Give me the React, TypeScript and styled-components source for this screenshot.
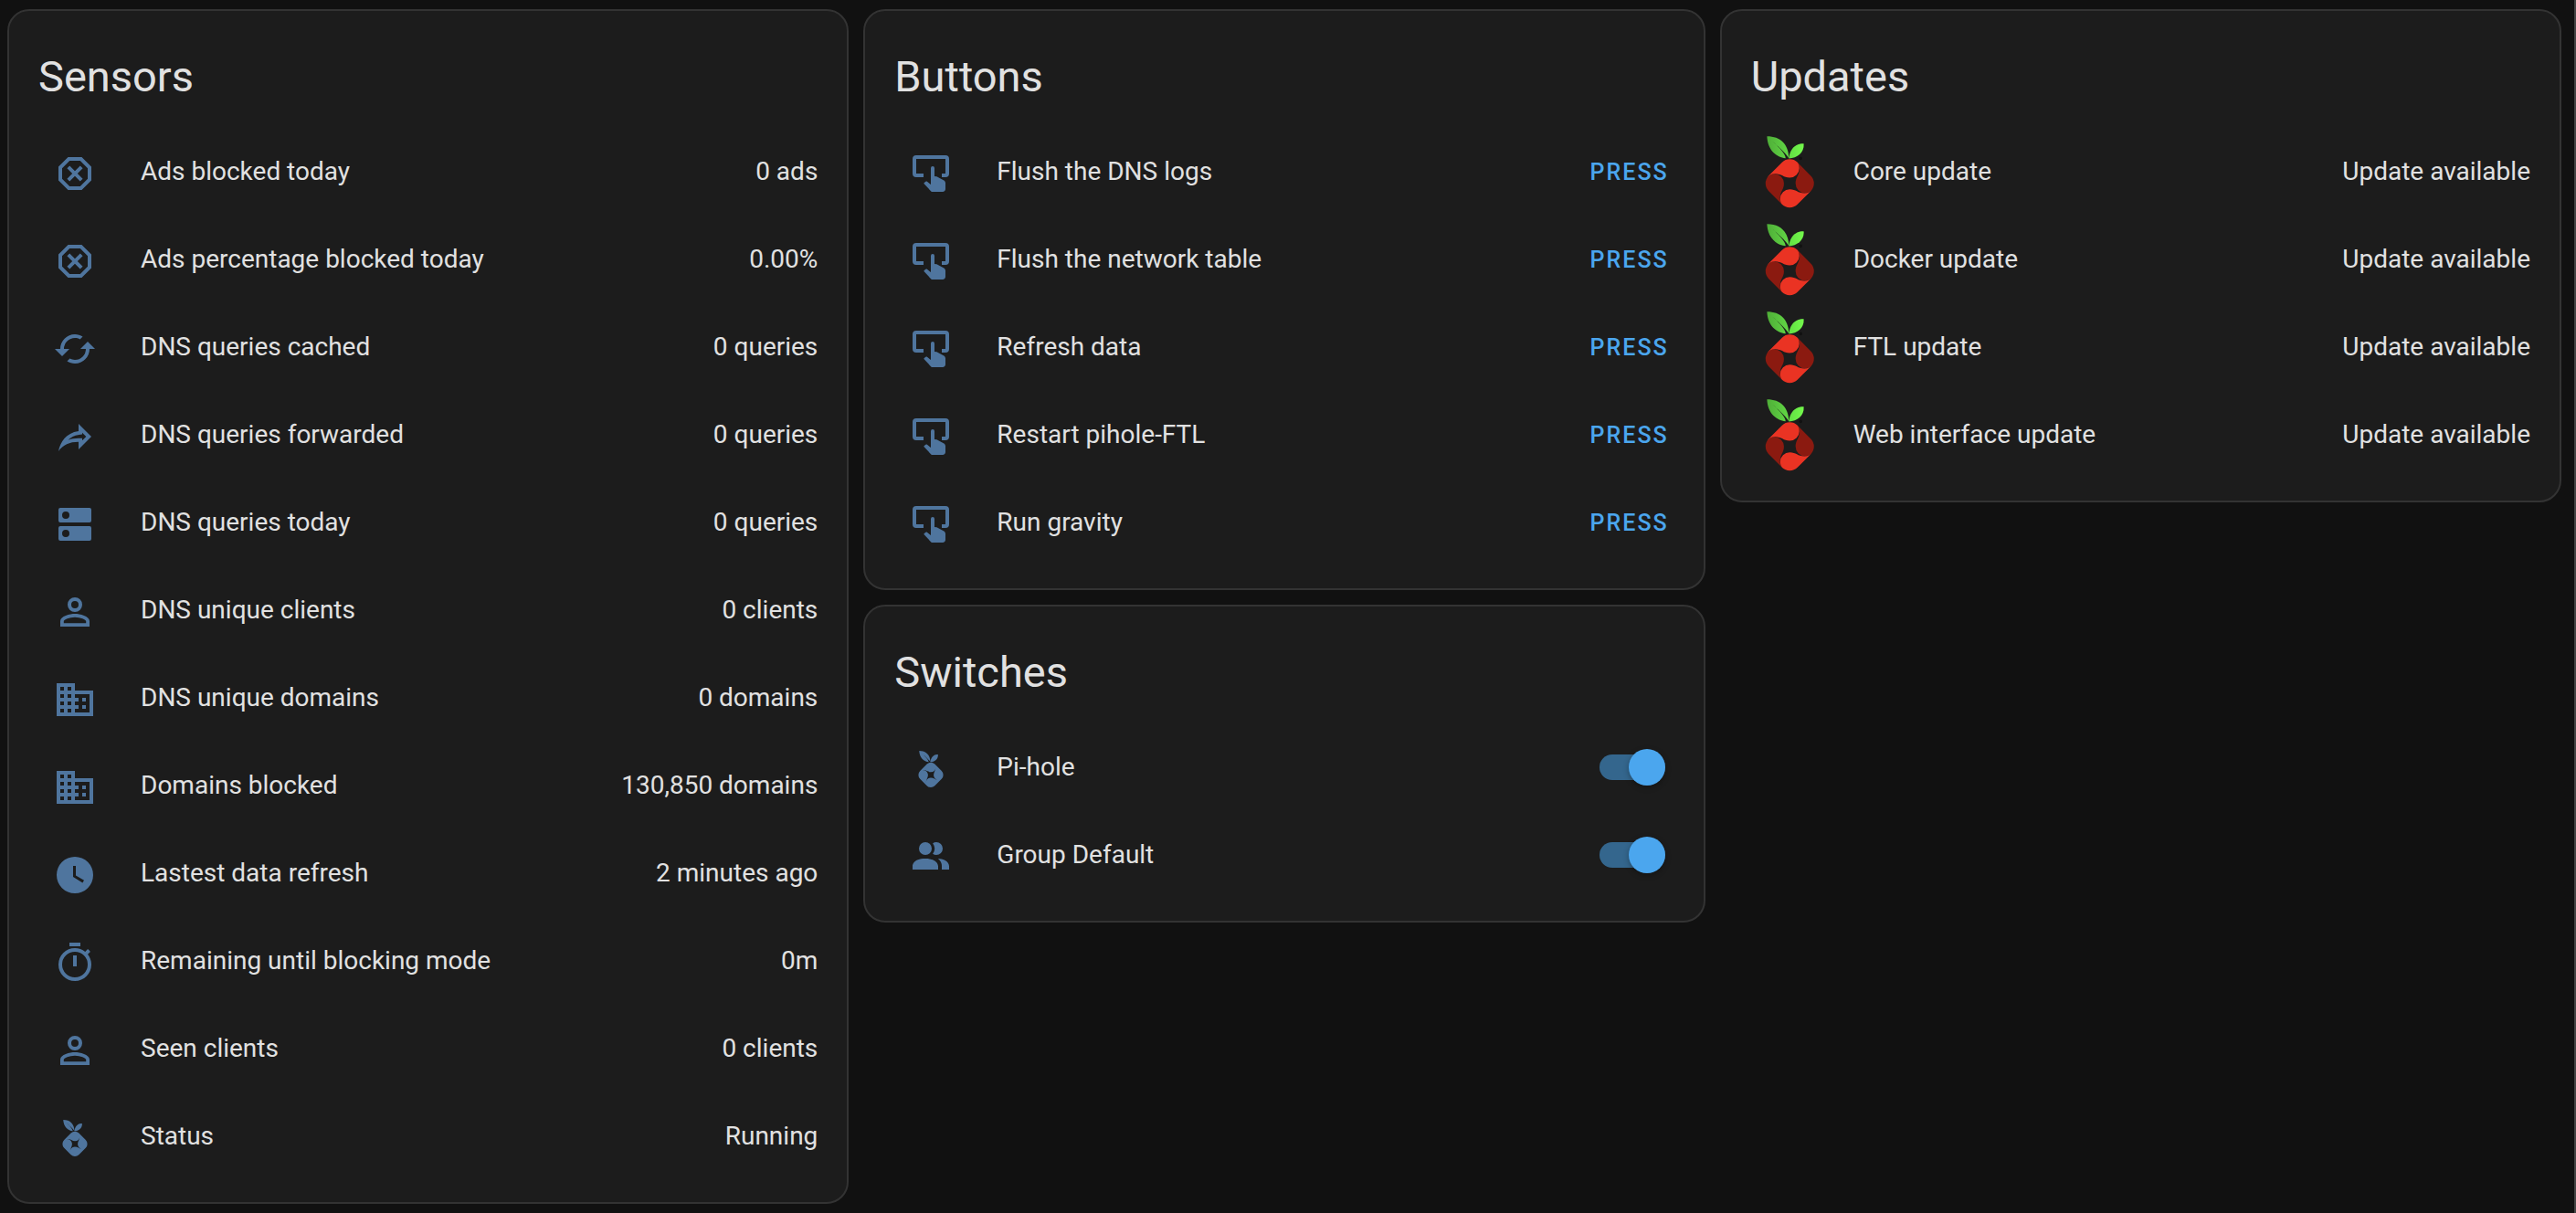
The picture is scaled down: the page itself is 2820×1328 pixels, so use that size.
import React, { useId, useState } from 'react';
import styled, { createGlobalStyle } from 'styled-components';

const GlobalStyle = createGlobalStyle`
  *, *::before, *::after { box-sizing: border-box; }
  body {
    margin: 0;
    background: #111111;
    color: #e1e1e1;
    font-family: Roboto, "Noto Sans", sans-serif;
    font-size: 28px;
    line-height: 40px;
    -webkit-font-smoothing: antialiased;
  }
`;

const Dashboard = styled.main`
  display: grid;
  grid-template-columns: repeat(3, minmax(0, 1fr));
  align-items: start;
  gap: 16px;
  min-height: 100vh;
  padding: 10px 14px 10px 8px;
  border-right: 2px solid #444444;
`;

const Column = styled.div`
  display: flex;
  flex-direction: column;
  gap: 16px;
`;

const CardBox = styled.section`
  padding: 24px 32px 32px;
  border: 2px solid #333333;
  border-radius: 24px;
  background: #1c1c1c;
`;

const CardTitle = styled.h2`
  margin: 0 0 16px;
  font-size: 47px;
  font-weight: 400;
  line-height: 96px;
`;

const Rows = styled.ul`
  display: flex;
  flex-direction: column;
  gap: 16px;
  margin: 0;
  padding: 0;
  list-style: none;
`;

const Row = styled.li`
  display: flex;
  align-items: center;
  height: 80px;
`;

const Badge = styled.span`
  display: flex;
  flex: none;
  align-items: center;
  justify-content: center;
  width: 80px;
  height: 80px;
  margin-right: 32px;
  color: #4f759e;
`;

const Glyph = styled.svg`
  width: 48px;
  height: 48px;
  margin-top: 4px;
  fill: currentColor;
`;

const Logo = styled.svg`
  width: 80px;
  height: 80px;
`;

const Name = styled.span`
  flex: 1;
  min-width: 0;
  overflow: hidden;
  text-overflow: ellipsis;
  white-space: nowrap;
`;

const NameLabel = styled(Name).attrs({ as: 'label' })<{ htmlFor?: string }>``;

const Value = styled.span`
  flex: none;
  white-space: nowrap;
`;

const PressButton = styled.button`
  flex: none;
  height: 72px;
  margin-right: -10px;
  padding: 0 16px;
  border: 0;
  border-radius: 8px;
  background: transparent;
  color: #4ba6ee;
  font-family: inherit;
  font-size: 25px;
  font-weight: 500;
  letter-spacing: 2px;
  text-transform: uppercase;
  cursor: pointer;
`;

const Toggle = styled.input`
  appearance: none;
  display: flex;
  flex: none;
  align-items: center;
  width: 72px;
  height: 28px;
  margin: 0 10px 0 0;
  border-radius: 14px;
  background: #666666;
  cursor: pointer;

  &::before {
    content: "";
    width: 40px;
    height: 40px;
    border-radius: 50%;
    background: #bdbdbd;
    box-shadow: 0 2px 6px rgba(0, 0, 0, 0.3);
  }

  &:checked {
    justify-content: flex-end;
    background: #34668d;
  }

  &:checked::before {
    background: #4ba6ee;
  }
`;

const paths = {
  closeOctagon:
    'M8.27,3L3,8.27V15.73L8.27,21H15.73L21,15.73V8.27L15.73,3M9.1,5H14.9L19,9.1V14.9L14.9,19H9.1L5,14.9V9.1M9.12,7.71L7.71,9.12L10.59,12L7.71,14.88L9.12,16.29L12,13.41L14.88,16.29L16.29,14.88L13.41,12L16.29,9.12L14.88,7.71L12,10.59',
  cached:
    'M19,8L15,12H18A6,6 0 0,1 12,18C11,18 10.03,17.75 9.2,17.3L7.74,18.76C8.97,19.54 10.43,20 12,20A8,8 0 0,0 20,12H23M6,12A6,6 0 0,1 12,6C13,6 13.97,6.25 14.8,6.7L16.26,5.24C15.03,4.46 13.57,4 12,4A8,8 0 0,0 4,12H1L5,16L9,12',
  share:
    'M14,5V9C7,10 4,15 3,20C5.5,16.5 9,14.9 14,14.9V19L21,12L14,5M16,9.83L18.17,12L16,14.17V12.9H14C11.93,12.9 10.07,13.28 8.34,13.85C9.74,12.46 11.54,11.37 14.28,11L16,10.73V9.83Z',
  dns: 'M7,9A2,2 0 0,1 5,7A2,2 0 0,1 7,5A2,2 0 0,1 9,7A2,2 0 0,1 7,9M20,3H4A1,1 0 0,0 3,4V10A1,1 0 0,0 4,11H20A1,1 0 0,0 21,10V4A1,1 0 0,0 20,3M7,19A2,2 0 0,1 5,17A2,2 0 0,1 7,15A2,2 0 0,1 9,17A2,2 0 0,1 7,19M20,13H4A1,1 0 0,0 3,14V20A1,1 0 0,0 4,21H20A1,1 0 0,0 21,20V14A1,1 0 0,0 20,13Z',
  account:
    'M12,4A4,4 0 0,1 16,8A4,4 0 0,1 12,12A4,4 0 0,1 8,8A4,4 0 0,1 12,4M12,6A2,2 0 0,0 10,8A2,2 0 0,0 12,10A2,2 0 0,0 14,8A2,2 0 0,0 12,6M12,13C14.67,13 20,14.33 20,17V20H4V17C4,14.33 9.33,13 12,13M12,14.9C9.03,14.9 5.9,16.36 5.9,17V18.1H18.1V17C18.1,16.36 14.97,14.9 12,14.9Z',
  domain:
    'M18,15H16V17H18M18,11H16V13H18M20,19H12V17H14V15H12V13H14V11H12V9H20M10,7H8V5H10M10,11H8V9H10M10,15H8V13H10M10,19H8V17H10M6,7H4V5H6M6,11H4V9H6M6,15H4V13H6M6,19H4V17H6M12,7V3H2V21H22V7H12Z',
  clock:
    'M12,2A10,10 0 0,0 2,12A10,10 0 0,0 12,22A10,10 0 0,0 22,12A10,10 0 0,0 12,2M16.2,16.2L11,13V7H12.5V12.2L17,14.9L16.2,16.2Z',
  timer:
    'M12,20A7,7 0 0,1 5,13A7,7 0 0,1 12,6A7,7 0 0,1 19,13A7,7 0 0,1 12,20M19.03,7.39L20.45,5.97C20,5.46 19.55,5 19.04,4.56L17.62,6C16.07,4.74 14.12,4 12,4A9,9 0 0,0 3,13A9,9 0 0,0 12,22C17,22 21,17.97 21,13C21,10.88 20.26,8.93 19.03,7.39M11,14H13V8H11M15,1H9V3H15V1Z',
  tapButton:
    'M20,2H4A2,2 0 0,0 2,4V12A2,2 0 0,0 4,14H8V12H4V4H20V12H18V14H20A2,2 0 0,0 22,12V4A2,2 0 0,0 20,2M13,8A1,1 0 0,1 14,9V13.47L15.21,13.6L18.94,15.68C19.57,15.97 20,16.6 20,17.31V20.5C20,21.33 19.32,22 18.5,22H13C12.62,22 12.26,21.85 12,21.57L8.1,17.37L8.84,16.6C9.03,16.39 9.3,16.28 9.58,16.28H9.8L12,18V9A1,1 0 0,1 13,8Z',
  accounts:
    'M16 17V19H2V17S2 13 9 13 16 17 16 17M12.5 7.5A3.5 3.5 0 1 0 9 11A3.5 3.5 0 0 0 12.5 7.5M15.94 13A5.32 5.32 0 0 1 18 17V19H22V17S22 13.37 15.94 13M15 4A3.39 3.39 0 0 0 13.07 4.59A5 5 0 0 1 13.07 10.41A3.39 3.39 0 0 0 15 11A3.5 3.5 0 0 0 15 4Z',
};

const leafLeft =
  'M4.344 0c.238 4.792 3.256 7.056 6.252 7.376.165-1.692-4.319-5.6-4.319-5.6-.008-.011.009-.025.019-.014 0 0 4.648 4.01 5.423 5.645L11.719 7.113C11.48 2.753 8.993 0 4.344 0z';
const leafRight = 'M11.719 7.407c2.762-.15 5.196-1.947 5-4.912 0 0-4.12-.613-5 4.618z';
const berry =
  'M12 7.682a3.68 3.68 0 0 0-2.591 1.079L4.94 13.227a3.683 3.683 0 0 0-1.097 2.611A3.681 3.681 0 0 0 4.92 18.45l4.464 4.466a3.69 3.69 0 0 0 5.222.002l4.469-4.465a3.683 3.683 0 0 0 1.082-2.613a3.683 3.683 0 0 0-1.077-2.607l-4.466-4.468A3.69 3.69 0 0 0 12 7.682z';
const berryHole =
  'M15.165 11.039c.023 1.748-1.33 3.078-1.33 4.806.164 2.227 1.733 3.207 3.266 3.146-.035.003-.068.007-.104.009-1.847.135-3.209-1.326-5.002-1.326-2.23.164-3.21 1.736-3.147 3.27l-.008-.104c-.133-1.847 1.328-3.21 1.328-5.002-.173-2.32-1.867-3.284-3.46-3.132.1-.011.203-.021.31-.027 1.847-.133 3.209 1.328 5.002 1.328 2.082-.155 3.074-1.536 3.145-2.968z';
// One quarter of the berry, around its own centre; the others are turned copies.
const petal =
  'M-7.5 -2.1A3.68 3.68 0 0 1 -7.06 -2.61L-2.59 -7.08A3.68 3.68 0 0 1 2.59 -7.08C3 -6.6 3.2 -5.8 3.2 -5.1A3.2 3.15 0 0 1 0 -1.95C-2.2 -1.95 -2.6 -3.25 -4.95 -3.25C-6.1 -3.25 -6.9 -2.8 -7.5 -2.1Z';

type IconName = keyof typeof paths | 'pihole';

function Icon({ name }: { name: IconName }) {
  if (name === 'pihole') {
    return (
      <Glyph viewBox="-2.4 -2.4 28.8 28.8" aria-hidden="true">
        <path d={leafLeft} />
        <path d={leafRight} />
        <path fillRule="evenodd" d={berry + berryHole} />
      </Glyph>
    );
  }
  return (
    <Glyph viewBox="0 0 24 24" aria-hidden="true">
      <path d={paths[name]} />
    </Glyph>
  );
}

function PiholeLogo() {
  const id = useId();
  return (
    <Logo viewBox="-1 -0.4 24.6 24.6" aria-hidden="true">
      <defs>
        <linearGradient id={`${id}a`} x1="0" x2="1">
          <stop offset="0" stopColor="#4fae38" />
          <stop offset="1" stopColor="#62d845" />
        </linearGradient>
        <linearGradient id={`${id}b`} x1="0" x2="1">
          <stop offset="0" stopColor="#62e043" />
          <stop offset="1" stopColor="#74f94c" />
        </linearGradient>
      </defs>
      <path fill={`url(#${id}a)`} d={leafLeft} />
      <path fill={`url(#${id}b)`} d={leafRight} />
      <ellipse cx="15.7" cy="7.4" rx="0.5" ry="0.6" fill="#111111" />
      <g transform="translate(12 15.84)">
        <g fill="#8b1a10">
          <path d={petal} transform="rotate(90)" />
          <path d={petal} transform="rotate(270)" />
        </g>
        <g fill="#ea3323">
          <path d={petal} />
          <path d={petal} transform="rotate(180)" />
        </g>
      </g>
    </Logo>
  );
}

function Card({ title, children }: { title: string; children: React.ReactNode }) {
  return (
    <CardBox>
      <CardTitle>{title}</CardTitle>
      <Rows>{children}</Rows>
    </CardBox>
  );
}

const sensors: [IconName, string, string][] = [
  ['closeOctagon', 'Ads blocked today', '0 ads'],
  ['closeOctagon', 'Ads percentage blocked today', '0.00%'],
  ['cached', 'DNS queries cached', '0 queries'],
  ['share', 'DNS queries forwarded', '0 queries'],
  ['dns', 'DNS queries today', '0 queries'],
  ['account', 'DNS unique clients', '0 clients'],
  ['domain', 'DNS unique domains', '0 domains'],
  ['domain', 'Domains blocked', '130,850 domains'],
  ['clock', 'Lastest data refresh', '2 minutes ago'],
  ['timer', 'Remaining until blocking mode', '0m'],
  ['account', 'Seen clients', '0 clients'],
  ['pihole', 'Status', 'Running'],
];

const actions = ['Flush the DNS logs', 'Flush the network table', 'Refresh data', 'Restart pihole-FTL', 'Run gravity'];
const updates = ['Core update', 'Docker update', 'FTL update', 'Web interface update'];

function SwitchRow({ id, icon, name }: { id: string; icon: IconName; name: string }) {
  const [on, setOn] = useState(true);
  return (
    <Row>
      <Badge><Icon name={icon} /></Badge>
      <NameLabel htmlFor={id}>{name}</NameLabel>
      <Toggle id={id} type="checkbox" role="switch" checked={on} onChange={() => setOn(!on)} />
    </Row>
  );
}

export default function App() {
  return (
    <>
      <GlobalStyle />
      <Dashboard>
        <Column>
          <Card title="Sensors">
            {sensors.map(([icon, name, value]) => (
              <Row key={name}>
                <Badge><Icon name={icon} /></Badge>
                <Name>{name}</Name>
                <Value>{value}</Value>
              </Row>
            ))}
          </Card>
        </Column>
        <Column>
          <Card title="Buttons">
            {actions.map((name) => (
              <Row key={name}>
                <Badge><Icon name="tapButton" /></Badge>
                <Name>{name}</Name>
                <PressButton type="button" aria-label={`Press: ${name}`}>Press</PressButton>
              </Row>
            ))}
          </Card>
          <Card title="Switches">
            <SwitchRow id="switch-pihole" icon="pihole" name="Pi-hole" />
            <SwitchRow id="switch-group" icon="accounts" name="Group Default" />
          </Card>
        </Column>
        <Column>
          <Card title="Updates">
            {updates.map((name) => (
              <Row key={name}>
                <Badge><PiholeLogo /></Badge>
                <Name>{name}</Name>
                <Value>Update available</Value>
              </Row>
            ))}
          </Card>
        </Column>
      </Dashboard>
    </>
  );
}
